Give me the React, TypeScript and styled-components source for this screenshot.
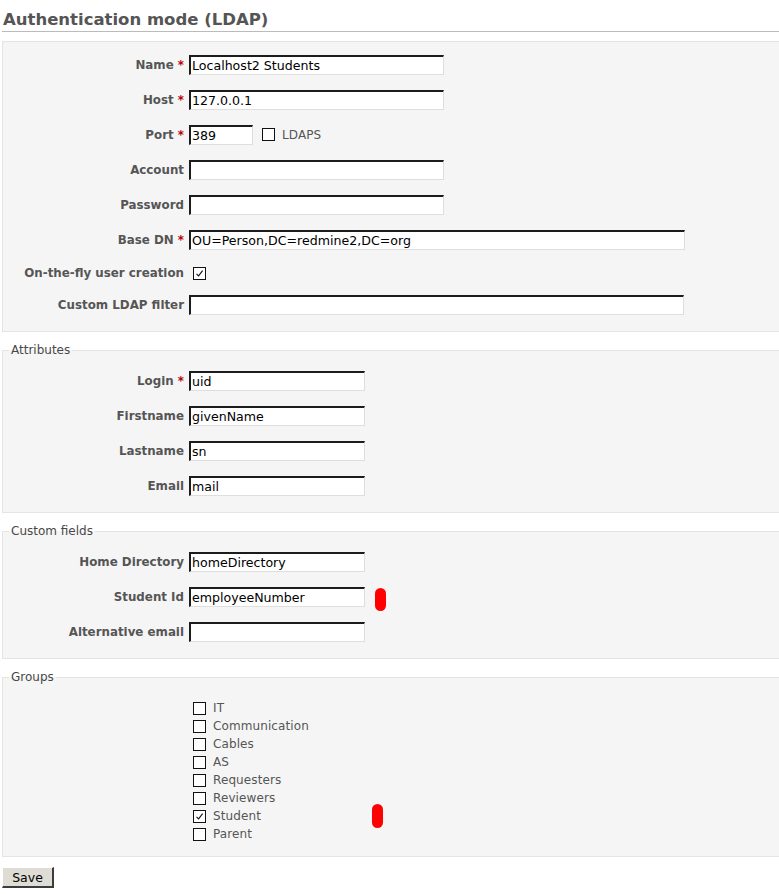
import * as React from 'react';
import styled, { createGlobalStyle } from 'styled-components';

const GlobalStyle = createGlobalStyle`
  html, body {
    margin: 0;
    padding: 0;
    background: #ffffff;
    overflow-x: hidden;
  }
  body {
    font-family: "DejaVu Sans", Verdana, sans-serif;
    font-size: 12px;
    color: #484848;
  }
`;

const Page = styled.div`
  width: 778px;
  padding: 0 0 20px 2px;
`;

const Title = styled.h2`
  margin: 0 0 9px;
  padding: 10px 0 1px 1px;
  font-size: 16.5px;
  line-height: 20px;
  font-weight: bold;
  color: #555555;
  border-bottom: 1px solid #bbbbbb;
`;

const Box = styled.div`
  background: #f5f5f5;
  border: 1px solid #e4e4e4;
  padding: 5px 0 9px;
`;

const Fieldset = styled.fieldset`
  margin: 11px 0 0;
  padding: 6px 0 9px;
  border: 1px solid #e4e4e4;
  background: #f5f5f5;
  min-width: 0;
`;

const Legend = styled.legend`
  margin-left: 6px;
  padding: 0 2px;
  line-height: 14px;
  font-size: 12px;
  color: #484848;
`;

const Row = styled.div<{ $compact?: boolean }>`
  position: relative;
  display: flex;
  align-items: center;
  height: ${p => (p.$compact ? 30 : 35)}px;
  padding-top: ${p => (p.$compact ? 2 : 0)}px;
  box-sizing: border-box;
`;

const Label = styled.label`
  width: 181px;
  margin-right: 5px;
  text-align: right;
  font-weight: bold;
  font-size: 11.85px;
  color: #555555;
  white-space: nowrap;
`;

const Required = styled.span`
  color: #bb0000;
`;

const TextInput = styled.input<{ $width: number }>`
  box-sizing: border-box;
  width: ${p => p.$width}px;
  height: 20px;
  margin: 0;
  padding: 0 1px;
  border-style: solid;
  border-width: 2px 1px 1px 2px;
  border-color: #1c1c1c #dedede #dedede #1c1c1c;
  background: #ffffff;
  font-family: "DejaVu Sans", Verdana, sans-serif;
  font-size: 12.6px;
  color: #000000;
  outline: none;
`;

const CheckBox = styled.span<{ $gap: number }>`
  display: inline-flex;
  align-items: center;
  justify-content: center;
  box-sizing: border-box;
  width: 13px;
  height: 13px;
  margin-left: ${p => p.$gap}px;
  border: 1px solid #111111;
  background: #ffffff;
  flex: none;
`;

const CheckText = styled.span`
  margin-left: 7px;
  font-size: 12px;
  letter-spacing: 0.1px;
  color: #555555;
`;

const GroupList = styled.div`
  padding: 9px 0 4px;
`;

const GroupItem = styled.div`
  position: relative;
  display: flex;
  align-items: center;
  height: 18px;
`;

const Marker = styled.span<{ $left: number; $top: number; $height: number }>`
  position: absolute;
  left: ${p => p.$left}px;
  top: ${p => p.$top}px;
  width: 11px;
  height: ${p => p.$height}px;
  border-radius: 6px;
  background: #ff0000;
`;

const SaveButton = styled.button`
  margin-top: 10px;
  width: 52px;
  height: 21px;
  padding: 0;
  border-style: solid;
  border-width: 1px 2px 2px 1px;
  border-color: #ffffff #3c3c3c #3c3c3c #ffffff;
  background: #dedcd5;
  font-family: "DejaVu Sans", Verdana, sans-serif;
  font-size: 12.5px;
  color: #000000;
`;

const Check: React.FC<{ checked?: boolean; gap: number }> = ({ checked, gap }) => (
  <CheckBox $gap={gap}>
    {checked && (
      <svg width="9" height="9" viewBox="0 0 9 9">
        <path d="M1.5 4.8 L3.6 6.9 L7.6 1.6" fill="none" stroke="#111" strokeWidth="1.1" />
      </svg>
    )}
  </CheckBox>
);

interface FieldProps {
  label: string;
  required?: boolean;
  value?: string;
  width: number;
  children?: React.ReactNode;
}

const Field: React.FC<FieldProps> = ({ label, required, value = '', width, children }) => (
  <Row>
    <Label>
      {label}
      {required && <Required> *</Required>}
    </Label>
    <TextInput $width={width} defaultValue={value} readOnly />
    {children}
  </Row>
);

const groups = ['IT', 'Communication', 'Cables', 'AS', 'Requesters', 'Reviewers', 'Student', 'Parent'];

export default function App() {
  return (
    <Page>
      <GlobalStyle />
      <Title>Authentication mode (LDAP)</Title>
      <Box>
        <Field label="Name" required value="Localhost2 Students" width={255} />
        <Field label="Host" required value="127.0.0.1" width={255} />
        <Field label="Port" required value="389" width={64}>
          <Check gap={9} />
          <CheckText>LDAPS</CheckText>
        </Field>
        <Field label="Account" width={255} />
        <Field label="Password" width={255} />
        <Field label="Base DN" required value="OU=Person,DC=redmine2,DC=org" width={496} />
        <Row $compact>
          <Label>On-the-fly user creation</Label>
          <Check checked gap={4} />
        </Row>
        <Field label="Custom LDAP filter" width={495} />
      </Box>

      <Fieldset>
        <Legend>Attributes</Legend>
        <Field label="Login" required value="uid" width={176} />
        <Field label="Firstname" value="givenName" width={176} />
        <Field label="Lastname" value="sn" width={176} />
        <Field label="Email" value="mail" width={176} />
      </Fieldset>

      <Fieldset>
        <Legend>Custom fields</Legend>
        <Field label="Home Directory" value="homeDirectory" width={176} />
        <Field label="Student Id" value="employeeNumber" width={176}>
          <Marker $left={372} $top={9} $height={23} />
        </Field>
        <Field label="Alternative email" width={176} />
      </Fieldset>

      <Fieldset>
        <Legend>Groups</Legend>
        <GroupList>
          {groups.map(g => (
            <GroupItem key={g}>
              <Check gap={190} checked={g === 'Student'} />
              <CheckText>{g}</CheckText>
              {g === 'Student' && <Marker $left={369} $top={-3} $height={24} />}
            </GroupItem>
          ))}
        </GroupList>
      </Fieldset>

      <SaveButton>Save</SaveButton>
    </Page>
  );
}
